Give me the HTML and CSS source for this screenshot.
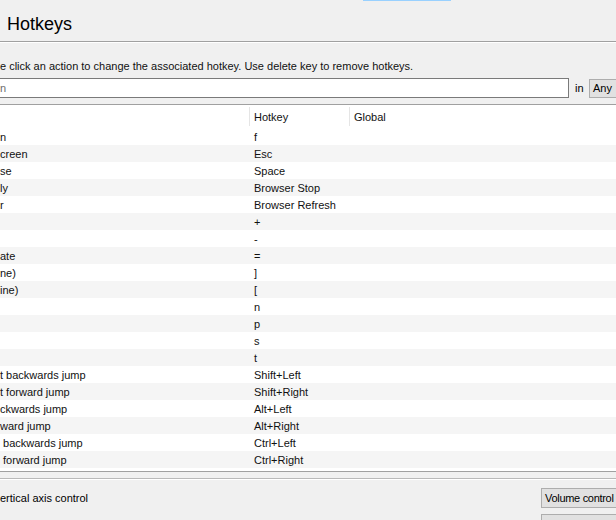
FILE: index.html
```html
<!DOCTYPE html>
<html>
<head>
<meta charset="utf-8">
<link rel="stylesheet" href="styles.css">
</head>
<body>
<div class="topmark"></div>
<div class="title">Hotkeys</div>
<div class="sep"></div>
<div class="hint">e click an action to change the associated hotkey. Use delete key to remove hotkeys.</div>
<div class="searchrow">
  <div class="search"><span class="ph">n</span></div>
  <span class="in">in</span>
  <div class="combo">Any</div>
</div>
<div class="table">
  <div class="row head"><div class="c1"></div><div class="c2">Hotkey</div><div class="c3">Global</div></div>
  <div class="row"><div class="c1">n</div><div class="c2">f</div><div class="c3"></div></div>
  <div class="row alt"><div class="c1">creen</div><div class="c2">Esc</div><div class="c3"></div></div>
  <div class="row"><div class="c1">se</div><div class="c2">Space</div><div class="c3"></div></div>
  <div class="row alt"><div class="c1">ly</div><div class="c2">Browser Stop</div><div class="c3"></div></div>
  <div class="row"><div class="c1">r</div><div class="c2">Browser Refresh</div><div class="c3"></div></div>
  <div class="row alt"><div class="c1"></div><div class="c2">+</div><div class="c3"></div></div>
  <div class="row"><div class="c1"></div><div class="c2">-</div><div class="c3"></div></div>
  <div class="row alt"><div class="c1">ate</div><div class="c2">=</div><div class="c3"></div></div>
  <div class="row"><div class="c1">ne)</div><div class="c2">]</div><div class="c3"></div></div>
  <div class="row alt"><div class="c1">ine)</div><div class="c2">[</div><div class="c3"></div></div>
  <div class="row"><div class="c1"></div><div class="c2">n</div><div class="c3"></div></div>
  <div class="row alt"><div class="c1"></div><div class="c2">p</div><div class="c3"></div></div>
  <div class="row"><div class="c1"></div><div class="c2">s</div><div class="c3"></div></div>
  <div class="row alt"><div class="c1"></div><div class="c2">t</div><div class="c3"></div></div>
  <div class="row"><div class="c1">t backwards jump</div><div class="c2">Shift+Left</div><div class="c3"></div></div>
  <div class="row alt"><div class="c1">t forward jump</div><div class="c2">Shift+Right</div><div class="c3"></div></div>
  <div class="row"><div class="c1">ckwards jump</div><div class="c2">Alt+Left</div><div class="c3"></div></div>
  <div class="row alt"><div class="c1">ward jump</div><div class="c2">Alt+Right</div><div class="c3"></div></div>
  <div class="row"><div class="c1">&nbsp;backwards jump</div><div class="c2">Ctrl+Left</div><div class="c3"></div></div>
  <div class="row alt"><div class="c1">&nbsp;forward jump</div><div class="c2">Ctrl+Right</div><div class="c3"></div></div>
</div>
<div class="group"></div>
<div class="opt">
  <span class="label">ertical axis control</span>
  <div class="btn">Volume control</div>
</div>
<div class="opt opt2">
  <span class="label">orizontal axis control</span>
  <div class="btn">Position control</div>
</div>
</body>
</html>
```

FILE: styles.css
```css
html, body {
  margin: 0;
  padding: 0;
  background: #f0f0f0;
  font-family: "Liberation Sans", Arial, sans-serif;
  font-size: 11px;
  color: #000;
  overflow: hidden;
  height: 520px;
}

.topmark {
  height: 1px;
  width: 88px;
  margin-left: 363px;
  background: #99d1ff;
}

.title {
  padding: 6px 0 0 7px;
  height: 34px;
  line-height: 34px;
  font-size: 18px;
}

.sep {
  border-top: 1px solid #a0a0a0;
  border-bottom: 1px solid #ffffff;
}

.hint {
  margin-top: 17px;
  line-height: 13px;
  height: 13px;
  white-space: nowrap;
  color: #111;
}

.searchrow {
  margin-top: 5px;
  display: flex;
  align-items: flex-start;
  height: 20px;
  white-space: nowrap;
}

.search {
  margin-left: -1px;
  width: 568px;
  height: 18px;
  border: 1px solid #7a7a7a;
  background: #fff;
  line-height: 18px;
  flex: none;
}

.ph {
  color: #6d6d6d;
}

.in {
  margin-left: 6px;
  line-height: 20px;
  width: 14px;
  flex: none;
}

.combo {
  margin-top: 1px;
  flex: none;
  width: 60px;
  height: 17px;
  border: 1px solid #adadad;
  background: #e1e1e1;
  line-height: 17px;
  padding-left: 3px;
}

.table {
  margin-top: 6px;
  border-top: 1px solid #a0a0a0;
  border-bottom: 1px solid #a0a0a0;
  background: #fff;
  padding-bottom: 3px;
}

.row {
  display: grid;
  grid-template-columns: 249px 100px 1fr;
  height: 17px;
  line-height: 19px;
  white-space: nowrap;
  overflow: hidden;
  color: #111;
}

.row.alt {
  background: #f5f5f5;
}

.row > div {
  overflow: hidden;
}

.row .c2, .row .c3 {
  padding-left: 5px;
}

.row.head {
  height: 23px;
  line-height: 21px;
  padding-top: 2px;
  box-sizing: border-box;
}

.row.head .c2, .row.head .c3 {
  border-left: 1px solid #e5e5e5;
  padding-left: 4px;
  height: 19px;
}

.group {
  margin-top: 6px;
  border-top: 1px solid #b9b9b9;
  border-bottom: 1px solid #ffffff;
}

.opt {
  margin-top: 8px;
  display: flex;
  justify-content: space-between;
  align-items: center;
  height: 20px;
  white-space: nowrap;
}

.opt2 {
  margin-top: 6px;
}

.label {
  line-height: 20px;
}

.btn {
  width: 80px;
  margin-right: -10px;
  height: 18px;
  border: 1px solid #adadad;
  background: #e1e1e1;
  line-height: 18px;
  padding-left: 3px;
  letter-spacing: -0.3px;
  flex: none;
}
```
